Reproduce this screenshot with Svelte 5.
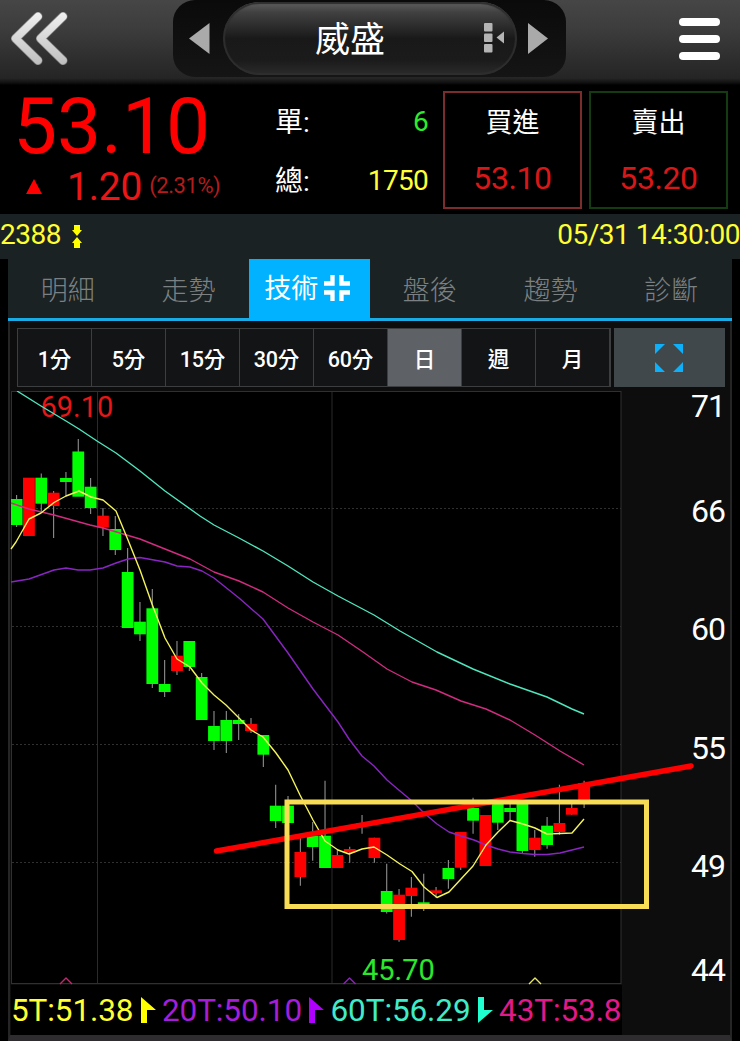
<script>
  const tabs = ['明細', '走勢', '技術', '盤後', '趨勢', '診斷'];
  const periods = ['1分', '5分', '15分', '30分', '60分', '日', '週', '月'];

  // direction, body top, body bottom, high, low
  const candles = [
    ['g', 499, 525, 495, 527], ['r', 477.7, 536, 478, 536], ['g', 477.7, 503.7, 473.5, 512],
    ['r', 492.7, 506, 491, 538], ['g', 478, 482, 472, 496], ['g', 451.5, 496.7, 439, 496],
    ['g', 486.7, 508, 478, 514], ['r', 515.7, 527.5, 508, 536], ['g', 529, 550, 516, 555],
    ['g', 572, 628, 548, 628], ['g', 621.7, 634.3, 602, 641], ['g', 608.3, 684, 589, 688],
    ['g', 684, 692, 660, 697], ['r', 655.7, 671, 641, 675], ['g', 641, 667, 641, 671],
    ['g', 677, 720, 673, 720], ['g', 726, 741, 711, 750], ['g', 720, 741, 711, 753],
    ['g', 720, 724, 714, 740], ['r', 724, 731, 718, 733], ['g', 735, 754.7, 735, 767],
    ['g', 805.7, 821, 784.7, 828], ['g', 805.7, 823, 796, 823], ['r', 852, 877, 837, 885.7],
    ['g', 835.7, 847, 822, 860.7], ['g', 835.7, 868, 780.7, 868], ['r', 855, 868, 850, 868],
    ['r', 849, 852.5, 846.7, 862.7], ['r', 823, 824, 815, 833.7], ['r', 837.7, 858, 837.7, 862.7],
    ['g', 891, 912, 863.7, 913.5], ['r', 894.7, 940, 889, 941.7], ['r', 887.7, 896, 877, 916.7],
    ['g', 902.3, 904, 873.7, 911], ['r', 890.3, 893, 887, 897.7], ['g', 868, 879, 860, 888.7],
    ['r', 832, 867.7, 832, 870], ['g', 808, 820.7, 797.7, 833.7], ['r', 815, 866, 815, 866],
    ['g', 799, 822.7, 798, 830], ['g', 808, 812, 803, 820.7], ['g', 802, 851, 802, 853.7],
    ['r', 837.7, 850, 830, 856.7], ['g', 825.7, 845, 817, 848.7], ['r', 823, 832, 784.7, 834.7],
    ['r', 808, 814.7, 803, 814.7], ['r', 783, 800, 780.7, 808],
  ];
  const cx = (i) => 16.6 + i * 12.337;

  const ma60 = '17,391 41,406 66,421 79,429 97,441 116,453 140,471 165,491 200,516 214,525 239,538 263,551 288,566 313,582 338,596 374,615 400,631 437,652 473,669 510,684 547,697 572,709 584,714';
  const ma43 = '11,503 29,509 54,515 90,525 103,528 140,539 165,549 190,559 214,572 239,581 263,592 288,608 313,622 338,635 363,652 387,669 412,682 436,690 461,701 486,709 510,720 535,735 560,751 584,765';
  const ma20 = '11,582 29,579 54,570 66,568 78,570 90,570 103,568 116,563 128,559 140,557.5 165,562 177,566 190,567 202,571 214,578 239,598 263,619 288,653 313,689 338,722 349,739 362,756 374,766 387,780 400,791 412,801 424,813 437,824 449,832 461,836 474,840 486,845 498,849 510,852 523,853.5 535,854.5 547,854.5 560,853 572,850 584,847';
  const ma5 = '11,549 16,542 29,519 41,513 54,502.5 66,496 79,491 91,497 103,500 116,511 128,540 140,570 152,604 165,638 177,659 190,667 202,683 214,695 226,705 239,718 251,730 263,737 276,753 288,770 300,795 313,820 325,841 338,850 349,854 362,849 374,847 387,855 400,864 412,871.5 424,887 437,897.5 449,892 461,879 473,866 486,845 498,832 510,820.5 523,824 535,828 547,834 572,833 584,819';

  const axis = [['71', 416.5], ['66', 521.5], ['60', 639.5], ['55', 758.5], ['49', 876.5], ['44', 980.5]];
</script>

<main>
  <header>
    <svg class="back" width="60" height="56" viewBox="0 0 60 56">
      <defs>
        <linearGradient id="metal" x1="0" y1="0" x2="0" y2="56" gradientUnits="userSpaceOnUse">
          <stop offset="0" stop-color="#f2f2f2" /><stop offset="1" stop-color="#bcbcbc" />
        </linearGradient>
      </defs>
      <path d="M29 5.500 6.500 27.500 29 49.500M54 5.500 31.500 27.500 54 49.500" fill="none" stroke="#858585" stroke-width="9" stroke-linecap="round" stroke-linejoin="round" />
      <path d="M29 5.500 6.500 27.500 29 49.500M54 5.500 31.500 27.500 54 49.500" fill="none" stroke="url(#metal)" stroke-width="7.500" stroke-linecap="round" stroke-linejoin="round" />
    </svg>
    <div class="switcher">
      <svg width="21" height="32" viewBox="0 0 21 32"><path d="M0 15.500 20.500 0v31z" fill="#aaa" /></svg>
      <div class="pill">
        <span>威盛</span>
        <svg width="21" height="30" viewBox="0 0 21 30" fill="#b4b4b4">
          <rect x="0" y="0" width="8.500" height="8.500" rx="1" /><rect x="0" y="10.500" width="8.500" height="8.500" rx="1" /><rect x="0" y="21" width="8.500" height="8.500" rx="1" />
          <path d="M12.500 14.500 20 8.500v12z" />
        </svg>
      </div>
      <svg class="next" width="20" height="32" viewBox="0 0 20 32"><path d="M20 15.500 0 0v31z" fill="#aaa" /></svg>
    </div>
    <div class="burger"><i></i><i></i><i></i></div>
  </header>

  <section class="quote">
    <div class="last">
      <div class="price">53.10</div>
      <div class="change">
        <svg width="16" height="15" viewBox="0 0 16 15"><path d="M8 0 16 15H0z" fill="#f00" /></svg>
        <b>1.20</b><span>(2.31%)</span>
      </div>
    </div>
    <div class="volume">
      <div><span>單:</span><em class="lime">6</em></div>
      <div><span>總:</span><em>1750</em></div>
    </div>
    <div class="box bid"><span>買進</span><b>53.10</b></div>
    <div class="box ask"><span>賣出</span><b>53.20</b></div>
  </section>

  <section class="info">
    <span>2388</span>
    <svg width="10" height="23" viewBox="0 0 10 23" fill="#ff0"><path d="M2 0h6v5h2l-5 6-5-6h2zM2 23h6v-5h2l-5-6-5 6h2z" /></svg>
    <span class="time">05/31 14:30:00</span>
  </section>

  <nav>
    {#each tabs as tab, i}
      <div class="tab" class:active={i === 2}>
        {tab}
        {#if i === 2}
          <svg width="26" height="26" viewBox="0 0 26 26" fill="none" stroke="#fff" stroke-width="4.300"><path d="M8.500 0v8.500H0M17.500 0v8.500H26M8.500 26v-8.500H0M17.500 26v-8.500H26" /></svg>
        {/if}
      </div>
    {/each}
  </nav>

  <section class="panel">
    <div class="toolbar">
      <div class="periods">
        {#each periods as p, i}<div class:selected={i === 5}>{p}</div>{/each}
      </div>
      <div class="expand">
        <svg width="28" height="28" viewBox="0 0 28 28" fill="#0eb0fa"><path d="M0 0h10L0 10zM28 0H18l10 10zM0 28h10L0 18zM28 28H18l10-10z" /></svg>
      </div>
    </div>

    <svg class="chart" width="720" height="594" viewBox="10 391 720 594">
      <rect x="11.500" y="391.500" width="609.500" height="592" fill="#000" stroke="#303030" />
      <path d="M97.500 392v591M332 392v591" stroke="#2b2b2b" />
      <path d="M12 508.500h609M12 626.500h609M12 744.500h609M12 862.500h609" stroke="#303030" stroke-dasharray="2 2" />
      {#each candles as [dir, top, bottom, high, low], i}
        <line x1={cx(i)} x2={cx(i)} y1={high} y2={low} stroke="#909090" stroke-width="1.100" />
        <rect x={Math.max(11, cx(i) - 5.900)} y={top} width={i === 0 ? 11.500 : 11.800} height={bottom - top} fill={dir === 'g' ? '#0f0' : '#f00'} />
      {/each}
      <text x="40.500" y="416.500" fill="#e81616" font-size="29">69.10</text>
      <text x="362" y="979.500" fill="#2ce82c" font-size="29">45.70</text>
      <g fill="none" stroke-width="1.400" stroke-linejoin="round">
        <polyline points={ma60} stroke="#4fe6bd" />
        <polyline points={ma43} stroke="#d02c80" />
        <polyline points={ma20} stroke="#8a25c4" />
        <polyline points={ma5} stroke="#f4f45a" />
        <path d="M60 984l6-6 6 6" stroke="#c02c70" />
        <path d="M343.500 984l6-6 6 6" stroke="#8a25b4" />
        <path d="M529 984l6-6 6 6" stroke="#e8e86a" />
      </g>
      {#each axis as [label, y]}<text x="691" {y} fill="#fff" font-size="32" letter-spacing="-0.900">{label}</text>{/each}
      <path d="M216.500 851 691 766" stroke="#f00" stroke-width="5.500" stroke-linecap="round" />
      <rect x="287" y="802" width="359.500" height="104.500" fill="none" stroke="#f9dc56" stroke-width="5" />
    </svg>

    <div class="legend">
      <span class="y">5T:51.38</span>
      <svg width="15" height="26" viewBox="0 0 15 26"><path d="M0 0 15 13H6v13H0z" fill="#ff0" /></svg>
      <span class="p">20T:50.10</span>
      <svg width="15" height="26" viewBox="0 0 15 26"><path d="M0 0 15 13H6v13H0z" fill="#b000ff" /></svg>
      <span class="t">60T:56.29</span>
      <svg width="15" height="26" viewBox="0 0 15 26"><path d="M0 26 15 13H6V0H0z" fill="#20ffd0" /></svg>
      <span class="m">43T:53.8</span>
    </div>
  </section>
</main>

<style>
  :global(body) { background: #000; }
  main { width: 740px; height: 1041px; overflow: hidden; background: #000; color: #fff; font-family: Roboto, "Noto Sans CJK TC", sans-serif; display: flex; flex-direction: column; }
  main * { box-sizing: border-box; }
  svg { display: block; flex: none; }
  b, em { font-weight: 400; font-style: normal; }

  header { height: 86px; flex: none; display: flex; align-items: flex-start; background: linear-gradient(#464646, #3c3c3c 35%, #2b2b2b 75%, #252525 91%, #111 96%, #000 99%); }
  .back { margin: 11px 0 0 9px; }
  .switcher { margin-left: 104px; width: 393px; height: 77px; background: linear-gradient(#0a0a0a, #151515); border-radius: 22px; display: flex; align-items: flex-start; padding: 1px 16px 0; }
  .switcher > svg { margin-top: 22px; }
  .pill { width: 294px; height: 73px; margin: 1px 11px 0 13px; flex: none; border-radius: 37px; background: linear-gradient(#606060, #414141 14%, #292929 36%, #191919 50%, #1b1b1b 80%, #2b2b2b); box-shadow: inset 0 0 1px 2px #2e2e2e; display: flex; align-items: center; padding-left: 92px; font-size: 35px; line-height: 73px; }
  .pill span { padding-top: 4px; }
  .pill svg { margin: 0 0 2px 99px; }
  .burger { margin: 18px 0 0 113px; width: 41px; display: flex; flex-direction: column; gap: 8.500px; }
  .burger i { height: 8.300px; border-radius: 4px; background: #fff; }

  .quote { height: 128px; flex: none; display: flex; padding-top: 5px; }
  .last { width: 275px; padding-left: 13px; }
  .price { height: 70px; line-height: 70px; font-size: 78.500px; color: #f00; }
  .change { display: flex; align-items: center; height: 50px; color: #ec1616; padding-left: 13px; }
  .change b { font-size: 39px; margin-left: 25px; line-height: 46px; padding-top: 2px; letter-spacing: -0.200px; }
  .change span { font-size: 22px; margin-left: 7px; letter-spacing: -0.450px; color: #b41c1c; padding-bottom: 2px; }
  .volume { width: 153px; font-size: 28px; }
  .volume div { height: 59px; display: flex; justify-content: space-between; align-items: center; color: #fff; }
  .volume div span { padding-bottom: 2px; }
  .volume em { color: #ff3; letter-spacing: -0.700px; padding-top: 1px; }
  .volume .lime { color: #2cec2c; }
  .box { width: 139px; height: 118px; border: 2px solid #7c2c2c; margin-left: 15px; display: flex; flex-direction: column; align-items: center; font-size: 27px; }
  .box.ask { border-color: #143c10; margin-left: 7px; }
  .box span { height: 57px; line-height: 60px; }
  .box b { font-size: 32px; line-height: 56px; letter-spacing: -0.400px; color: #d81818; }

  .info { height: 45px; flex: none; background: #1b2224; color: #ff3; display: flex; align-items: center; font-size: 28px; letter-spacing: -0.480px; padding-bottom: 5px; }
  .info svg { margin: 4px 0 0 11px; }
  .time { margin-left: auto; }

  nav { height: 62px; flex: none; margin: 0 8px; background: #1b2224; border-bottom: 3px solid #1aaae4; display: grid; grid-template-columns: repeat(6, minmax(0, 1fr)); }
  .tab { display: flex; align-items: center; justify-content: center; font-size: 27px; font-weight: 300; color: #7b8183; gap: 6px; padding: 0 1px 4px 0; }
  .tab.active { background: #00b2ff; color: #fff; font-weight: 400; height: 62px; padding: 0 5px 7px 0; }
  .tab.active svg { margin-top: 3px; }

  .panel { margin: 0 8px; height: 720px; border: 2px solid #252525; border-top: 0; border-bottom: 6px solid #2e2c2e; background: #0d0d0d; }
  .toolbar { height: 70px; display: flex; padding: 7px 5px 0 7px; gap: 3px; }
  .periods { width: 594px; height: 59px; display: flex; border: 1px solid #3c3e40; }
  .periods div { flex: 1; background: #121416; border-right: 1px solid #3c3e40; display: flex; align-items: center; justify-content: center; font-size: 21.500px; letter-spacing: -0.200px; font-weight: 500; padding-bottom: 1px; }
  .periods .selected { background: #5e6266; }
  .expand { width: 111px; height: 59px; background: #40484c; display: flex; align-items: center; justify-content: center; padding-right: 1px; }
  .chart text { font-family: Roboto, sans-serif; }
  .legend { height: 50px; width: 611px; background: #000; margin-left: 1px; display: flex; align-items: center; font-size: 31.500px; letter-spacing: -0.100px; white-space: nowrap; }
  .legend svg { margin: 0 6.200px 0 7.300px; }
  .y { color: #ff3; }
  .p { color: #a41ed8; }
  .t { color: #40ecc8; }
  .m { color: #e01a88; }
</style>
